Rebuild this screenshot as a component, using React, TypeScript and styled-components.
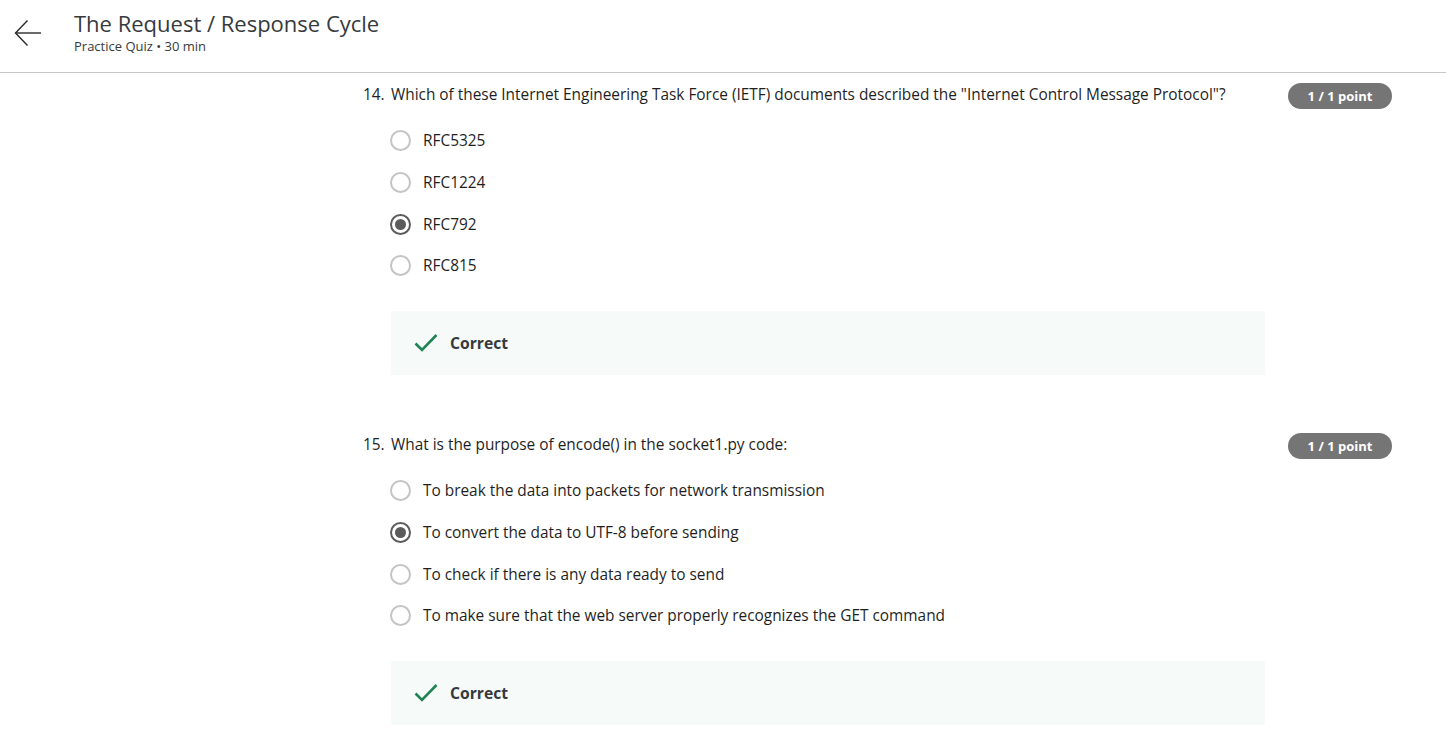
import React from "react";
import styled, { createGlobalStyle } from "styled-components";

const GlobalStyle = createGlobalStyle`
	body {
		margin: 0;
		background: #ffffff;
		font-family: "Open Sans", "Noto Sans", sans-serif;
		color: #1f1f1f;
	}
`;

/* Header */
const Header = styled.header`
	display: flex;
	align-items: center;
	height: 72px;
	border-bottom: 1px solid #c8c8c8;
	box-sizing: content-box;
`;

const BackButton = styled.button`
	display: flex;
	align-items: center;
	justify-content: center;
	width: 56px;
	height: 56px;
	margin-top: -6px;
	padding: 0;
	border: none;
	background: none;
	cursor: pointer;
`;

const TitleBlock = styled.div`
	display: flex;
	flex-direction: column;
	margin-left: 18px;
	margin-top: -9px;
`;

const Title = styled.h1`
	margin: 0;
	font-size: 22px;
	font-weight: 400;
	line-height: 28px;
	color: #373a3c;
`;

const Subtitle = styled.div`
	margin-top: 1px;
	font-size: 13px;
	line-height: 16px;
	color: #373a3c;
`;

/* Questions */
const Main = styled.main`
	padding: 10px 54px 0 363px;
`;

const QuestionBlock = styled.section`
	margin-bottom: 58px;
	&:last-child {
		margin-bottom: 0;
	}
`;

const QuestionRow = styled.div`
	display: flex;
	align-items: flex-start;
	justify-content: space-between;
	height: 26px;
`;

const QuestionText = styled.div`
	display: flex;
	font-size: 15.4px;
	line-height: 24px;
	color: #1f1f1f;
`;

const Number = styled.span`
	width: 28px;
`;

const PointPill = styled.div`
	display: flex;
	align-items: center;
	justify-content: center;
	width: 104px;
	height: 26px;
	border-radius: 13px;
	background: #757575;
	color: #ffffff;
	font-size: 13px;
	font-weight: 700;
`;

const OptionList = styled.div`
	display: flex;
	flex-direction: column;
	margin: 10px 0 0 27px;
`;

const OptionRow = styled.label<{ tall?: boolean }>`
	display: flex;
	align-items: center;
	height: ${({ tall }) => (tall ? "42px" : "41px")};
	font-size: 15.4px;
	color: #1f1f1f;
`;

const Radio = styled.span<{ checked: boolean }>`
	display: flex;
	align-items: center;
	justify-content: center;
	box-sizing: border-box;
	width: 21px;
	height: 21px;
	margin-right: 12px;
	border-radius: 50%;
	border: 2px solid ${({ checked }) => (checked ? "#5b5b5b" : "#c4c4c4")};
	&::after {
		content: "";
		display: ${({ checked }) => (checked ? "block" : "none")};
		width: 11px;
		height: 11px;
		border-radius: 50%;
		background: #5b5b5b;
	}
`;

const Feedback = styled.div`
	display: flex;
	align-items: center;
	width: 874px;
	height: 64px;
	margin: 25px 0 0 28px;
	padding-left: 23px;
	box-sizing: border-box;
	background: #f6faf9;
	font-size: 15.7px;
	font-weight: 700;
	color: #373a3c;
`;

const CheckIcon = styled.svg`
	margin-right: 12px;
`;

interface Question {
	number: number;
	text: string;
	options: string[];
	selected: number;
}

const questions: Question[] = [
	{
		number: 14,
		text: 'Which of these Internet Engineering Task Force (IETF) documents described the "Internet Control Message Protocol"?',
		options: ["RFC5325", "RFC1224", "RFC792", "RFC815"],
		selected: 2,
	},
	{
		number: 15,
		text: "What is the purpose of encode() in the socket1.py code:",
		options: [
			"To break the data into packets for network transmission",
			"To convert the data to UTF-8 before sending",
			"To check if there is any data ready to send",
			"To make sure that the web server properly recognizes the GET command",
		],
		selected: 1,
	},
];

export default function App() {
	return (
		<React.Fragment>
			<GlobalStyle />
			<Header>
				<BackButton aria-label="Back">
					<svg width="28" height="28" viewBox="0 0 28 28" fill="none" stroke="#2a2a2a" strokeWidth="1.4">
						<path d="M27 14H1.5" />
						<path d="M13.5 1.5L1.5 14l12 12.5" />
					</svg>
				</BackButton>
				<TitleBlock>
					<Title>The Request / Response Cycle</Title>
					<Subtitle>Practice Quiz • 30 min</Subtitle>
				</TitleBlock>
			</Header>
			<Main>
				{questions.map((question) => (
					<QuestionBlock key={question.number}>
						<QuestionRow>
							<QuestionText>
								<Number>{question.number}.</Number>
								<span>{question.text}</span>
							</QuestionText>
							<PointPill>1 / 1 point</PointPill>
						</QuestionRow>
						<OptionList>
							{question.options.map((option, index) => (
								<OptionRow key={option} tall={index < 3}>
									<Radio checked={index === question.selected} />
									{option}
								</OptionRow>
							))}
						</OptionList>
						<Feedback>
							<CheckIcon width="24" height="20" viewBox="0 0 24 20" fill="none" stroke="#1f8354" strokeWidth="2.6">
								<path d="M1.5 10.5l6.5 6.5L22.5 2" />
							</CheckIcon>
							Correct
						</Feedback>
					</QuestionBlock>
				))}
			</Main>
		</React.Fragment>
	);
}
